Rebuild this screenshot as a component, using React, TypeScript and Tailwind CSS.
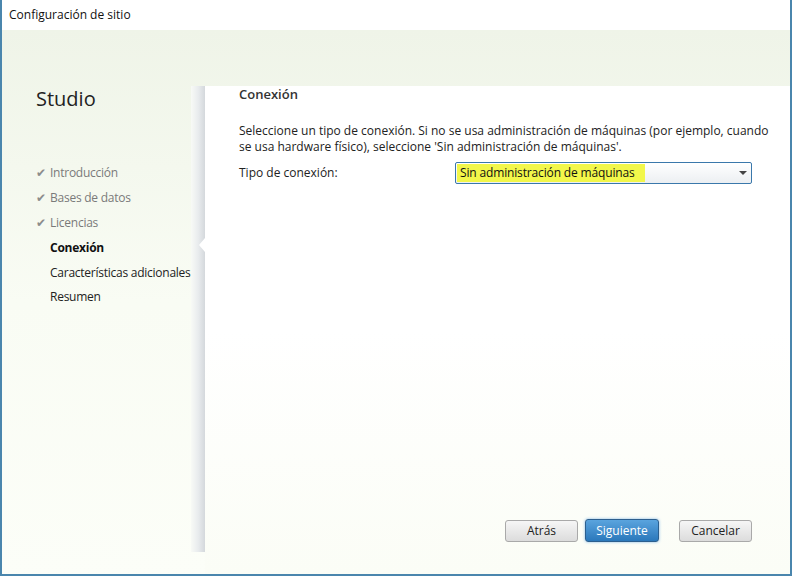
const steps = [
  { label: 'Introducción', done: true },
  { label: 'Bases de datos', done: true },
  { label: 'Licencias', done: true },
  { label: 'Conexión', current: true },
  { label: 'Características adicionales' },
  { label: 'Resumen' },
];

const btnGrey =
  'h-[22px] w-[73px] rounded-[3px] border border-[#a9a9a9] bg-gradient-to-b from-[#f6f6f6] to-[#dcdcdc] text-[12px] text-[#222]';

export default function App() {
  return (
    <div
      className="w-[794px] h-[578px] bg-white overflow-hidden"
      style={{ fontFamily: '"Open Sans", "Noto Sans", sans-serif' }}
    >
      <div className="w-[792px] h-[576px] border-l-2 border-r-2 border-b-2 border-[#4a86ad] flex flex-col">
        {/* title bar */}
        <div className="h-[30px] shrink-0 flex items-center pl-[7px] text-[12px] text-[#111] bg-white">
          Configuración de sitio
        </div>

        {/* body */}
        <div className="flex-1 flex flex-col bg-gradient-to-b from-[#eff4e8] via-[#f9fcf4] to-[#fcfef8]">
          <div className="h-[56px] shrink-0" />
          <div className="flex flex-1 min-h-0">
            {/* left nav */}
            <div className="w-[189px] shrink-0 pl-[34px] whitespace-nowrap">
              <div className="text-[20px] leading-[28px] text-[#222] -mt-[1px]">Studio</div>
              <div className="mt-[48px] flex flex-col tracking-[-0.25px]">
                {steps.map((s) => (
                  <div key={s.label} className="h-[24.8px] flex items-center text-[12px]">
                    <span
                      className="w-[14px] flex items-center text-[12px] text-[#8c8c8c]"
                      style={{ fontFamily: '"DejaVu Sans", sans-serif' }}
                    >
                      {s.done && '✔'}
                    </span>
                    <span
                      className={
                        s.done
                          ? 'text-[#7a7a7a]'
                          : s.current
                          ? 'font-bold text-[#111]'
                          : 'text-[#222]'
                      }
                    >
                      {s.label}
                    </span>
                  </div>
                ))}
              </div>
            </div>

            {/* shadow strip */}
            <div className="w-[14px] shrink-0 mb-[22px] bg-gradient-to-r from-[#f8faf6] via-[#e9ecee] to-[#d4d8dc]" />

            {/* right panel */}
            <div className="relative flex-1 flex flex-col bg-gradient-to-b from-white via-white to-[#fbfdf6] pl-[34px] pr-[14px]">
              <div className="absolute left-[-6px] top-[152px] w-0 h-0 border-y-[7px] border-y-transparent border-r-[6px] border-r-white" />
              <div className="text-[13px] font-semibold text-[#333] mt-[-2px] leading-[20px]">Conexión</div>
              <p className="mt-[19px] w-[536px] text-[12px] leading-[16px] text-[#222]">
                Seleccione un tipo de conexión. Si no se usa administración de máquinas (por ejemplo, cuando se usa
                hardware físico), seleccione 'Sin administración de máquinas'.
              </p>
              <div className="mt-[7px] flex items-center">
                <span className="w-[216px] text-[12px] text-[#222]">Tipo de conexión:</span>
                <div className="relative h-[22px] w-[297px] rounded-[2px] border border-[#3a78ab] bg-gradient-to-b from-white to-[#eceff2] flex items-center">
                  <span className="ml-[1px] h-[18px] pl-[3px] pr-[10px] bg-[#f2f74a] text-[12px] leading-[18px] text-[#111] tracking-[-0.15px]">
                    Sin administración de máquinas
                  </span>
                  <span className="absolute right-[4px] top-[8px] w-0 h-0 border-x-[4px] border-x-transparent border-t-[4px] border-t-[#444]" />
                </div>
              </div>

              <div className="flex-1" />
              <div className="flex items-center justify-end gap-[7px] mb-[32px] mr-[24px]">
                <button className={btnGrey}>Atrás</button>
                <button className="h-[23px] w-[74px] rounded-[3px] border border-[#2c5f8e] bg-gradient-to-b from-[#5aa4de] to-[#2a78bb] text-[12px] text-white shadow-[0_0_3px_#7fb6e6]">
                  Siguiente
                </button>
                <button className={`${btnGrey} ml-[13px]`}>Cancelar</button>
              </div>
            </div>
          </div>
        </div>
      </div>
    </div>
  );
}
